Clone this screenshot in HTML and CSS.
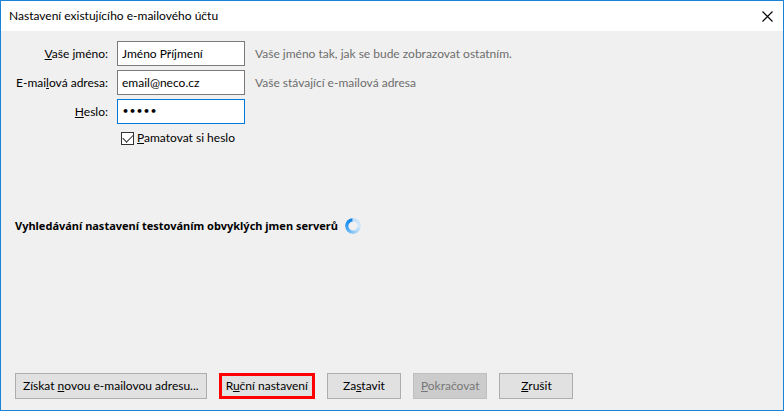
FILE: index.html
```html
<!DOCTYPE html>
<html lang="cs">
<head>
  <meta charset="UTF-8" />
  <meta name="viewport" content="width=device-width, initial-scale=1.0"/>
  <title>Nastavení existujícího e-mailového účtu</title>
  <link rel="stylesheet" href="styles.css">
</head>
<body>
  <form class="dialog">
    <header class="titlebar">
      <h1>Nastavení existujícího e-mailového účtu</h1>
      <button type="button" class="close" aria-label="Zavřít">
        <svg width="11" height="11" viewBox="0 0 11 11"><path d="M.5 .5l10 10M10.500 .5l-10 10" stroke="#000" stroke-width="1.1" fill="none"/></svg>
      </button>
    </header>

    <main class="content">
      <div class="fields">
        <label for="name"><u>V</u>aše jméno:</label>
        <input type="text" class="field" id="name" value="Jméno Příjmení">
        <span class="hint">Vaše jméno tak, jak se bude zobrazovat ostatním.</span>

        <label for="email">E-mai<u>l</u>ová adresa:</label>
        <input type="text" class="field" id="email" value="email@neco.cz">
        <span class="hint">Vaše stávající e-mailová adresa</span>

        <label for="password"><u>H</u>eslo:</label>
        <input type="password" class="field active" id="password" value="heslo">

        <div class="remember">
          <input type="checkbox" id="remember" checked>
          <label for="remember"><u>P</u>amatovat si heslo</label>
        </div>
      </div>

      <div class="status">
        <strong>Vyhledávání nastavení testováním obvyklých jmen serverů</strong>
        <span class="spinner"></span>
      </div>

      <div class="buttons">
        <button type="button" class="btn">Získat <u>n</u>ovou e-mailovou adresu...</button>
        <button type="button" class="btn highlight">R<u>u</u>ční nastavení</button>
        <button type="button" class="btn">Za<u>s</u>tavit</button>
        <button type="button" class="btn" disabled><u>P</u>okračovat</button>
        <button type="button" class="btn"><u>Z</u>rušit</button>
      </div>
    </main>
  </form>
</body>
</html>
```

FILE: styles.css
```css
* {
  box-sizing: border-box;
}

body {
  margin: 0;
  font-family: Lato, "Noto Sans", sans-serif;
  font-size: 12px;
  line-height: 16px;
  color: #000;
}

.dialog {
  display: flex;
  flex-direction: column;
  min-height: 100vh;
  border: 1px solid #1883d7;
  background: #f0f0f0;
}

.titlebar {
  display: flex;
  align-items: center;
  justify-content: space-between;
  height: 30px;
  padding-left: 8px;
  background: #fff;
}

.titlebar h1 {
  margin: 0;
  font-size: 12px;
  font-weight: normal;
}

.close {
  display: flex;
  padding: 10px;
  border: none;
  background: none;
}

.content {
  flex: 1;
  display: flex;
  flex-direction: column;
  padding: 10px 14px 11px;
}

.fields {
  display: grid;
  grid-template-columns: 93px 128px 1fr;
  column-gap: 9px;
  row-gap: 4px;
  align-items: center;
}

.fields > label {
  text-align: right;
  white-space: nowrap;
}

.field {
  width: 100%;
  height: 25px;
  padding: 0 4px;
  border: 1px solid #7a7a7a;
  background: #fff;
  color: #000;
  font: inherit;
}

.field.active {
  border-color: #0078d7;
  outline: none;
}

#password {
  font-family: "DejaVu Sans", sans-serif;
  font-size: 11px;
  font-weight: bold;
}

.hint {
  padding-left: 1px;
  color: #6d6d6d;
}

.remember {
  grid-column: 2 / 4;
  display: flex;
  align-items: center;
  gap: 3px;
  padding: 2px 4px;
}

/* flat checkbox with a thin tick */
.remember input {
  appearance: none;
  display: grid;
  place-items: center;
  width: 13px;
  height: 13px;
  margin: 0;
  border: 1px solid #333;
  background: #fff;
}

.remember input:checked::before {
  content: "";
  width: 9px;
  height: 5px;
  margin-bottom: 3px;
  border-left: 1px solid #333;
  border-bottom: 1px solid #333;
  transform: rotate(-45deg);
}

.status {
  display: flex;
  align-items: center;
  gap: 7px;
  margin-top: 70px;
  font-family: "Noto Sans", sans-serif;
  font-size: 11px;
}

.spinner {
  width: 16px;
  height: 16px;
  border-radius: 50%;
  background: conic-gradient(#c4e0f7, #d4e8f8 25%, #9fd0f7 45%, #55aef5 65%, #1e90f0 85%, #1a84e0 97%, #c4e0f7);
  -webkit-mask: radial-gradient(circle, transparent 4px, #000 5px);
  mask: radial-gradient(circle, transparent 4px, #000 5px);
}

.buttons {
  display: flex;
  gap: 12px;
  margin-top: auto;
}

.btn {
  min-width: 74px;
  height: 26px;
  padding: 0 7px;
  border: 1px solid #adadad;
  background: #e1e1e1;
  color: #000;
  font: inherit;
  white-space: nowrap;
}

.btn.highlight {
  padding: 0 4px;
  border: 3px solid #ff0000;
}

.btn:disabled {
  border-color: #bfbfbf;
  background: #ccc;
  color: #777;
}
```
